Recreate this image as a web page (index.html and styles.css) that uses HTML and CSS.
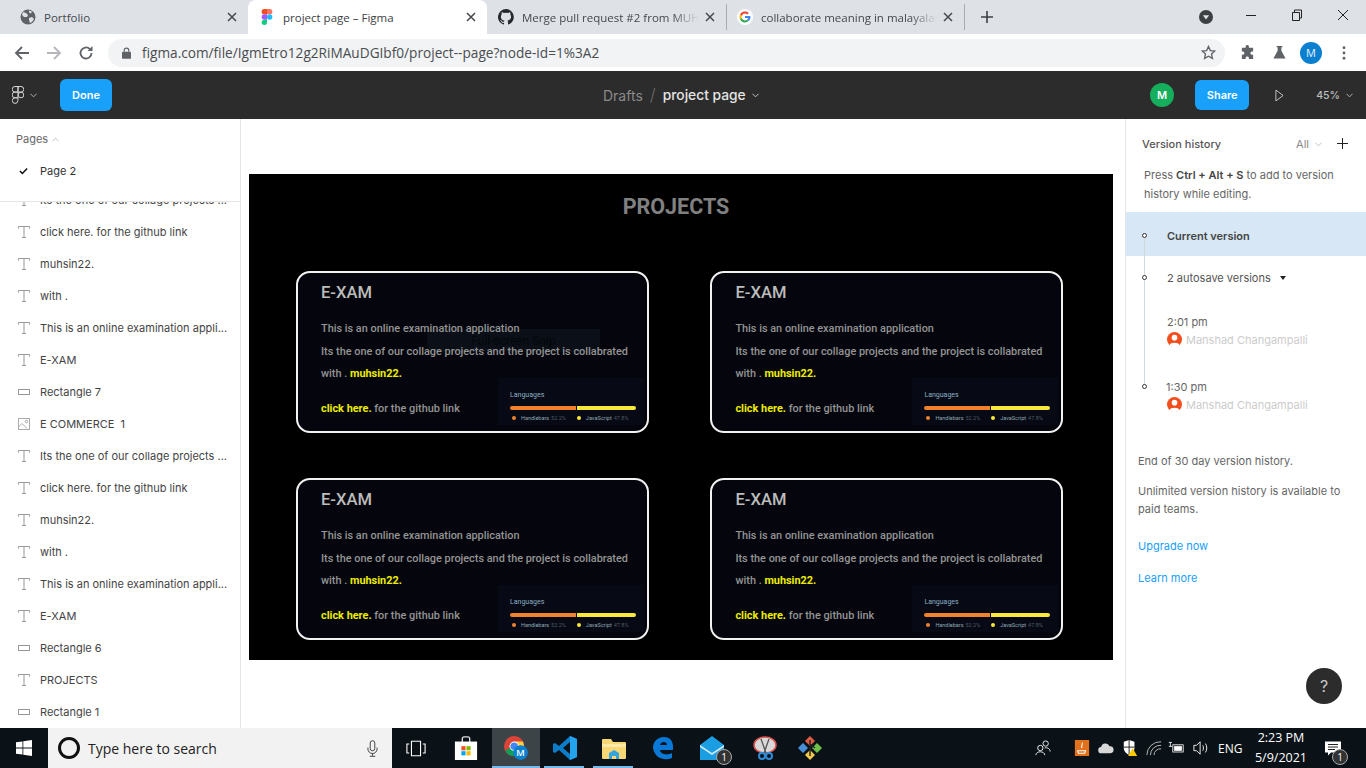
FILE: index.html

```html
<!doctype html>
<html>
<head>
  <meta charset='utf-8'>
  <title>project page – Figma</title>
  <link rel="stylesheet" href="styles.css">
</head>
<body>
<div id='tabstrip'>
  <div class='tab'>
    <svg class='favicon' viewBox='0 0 16 16'><circle cx='8' cy='8' r='7.5' fill='#5f6368'/><path d='M3 3l3 1 2 2-1 2-3 0-2-2zM9 9l3-1 2 2-2 3-2 1-1-3zM9 1.500l3 1-1 2-2-1z' fill='#dee1e6'/></svg>
    <span class='tabtitle'>Portfolio</span>
    <svg class='tabclose' viewBox='0 0 10 10'><path d='M1 1l8 8M9 1l-8 8' stroke='#45484c' stroke-width='1.500'/></svg>
  </div>
  <div class='tab active'>
    <svg class='favicon' viewBox='0 0 12 18'><path d='M3 0h3v6H3a3 3 0 010-6z' fill='#f24e1e'/><path d='M6 0h3a3 3 0 010 6H6z' fill='#ff7262'/><path d='M3 6h3v6H3a3 3 0 010-6z' fill='#a259ff'/><circle cx='9' cy='9' r='3' fill='#1abcfe'/><path d='M3 12h3v3a3 3 0 11-3-3z' fill='#0acf83'/></svg>
    <span class='tabtitle'>project page – Figma</span>
    <svg class='tabclose' viewBox='0 0 10 10'><path d='M1 1l8 8M9 1l-8 8' stroke='#45484c' stroke-width='1.500'/></svg>
  </div>
  <div class='tab'>
    <svg class='favicon' viewBox='0 0 16 16'><path fill='#24292e' d='M8 0a8 8 0 00-2.500 15.600c.4.1.5-.2.5-.4v-1.400c-2.200.5-2.700-1-2.700-1-.4-.9-.9-1.200-.9-1.200-.7-.5.1-.5.1-.5.8.1 1.200.8 1.200.8.700 1.200 1.900.9 2.300.7.100-.5.300-.9.500-1.100-1.800-.2-3.600-.9-3.600-4 0-.9.300-1.600.8-2.100-.1-.2-.4-1 .1-2.100 0 0 .7-.2 2.200.8a7.600 7.600 0 014 0c1.500-1 2.200-.8 2.200-.8.400 1.100.2 1.900.1 2.100.5.600.8 1.300.8 2.100 0 3.100-1.900 3.700-3.700 3.900.3.300.6.800.6 1.500v2.200c0 .2.100.5.600.4A8 8 0 008 0z'/></svg>
    <span class='tabtitle fade'>Merge pull request #2 from MUH</span>
    <svg class='tabclose' viewBox='0 0 10 10'><path d='M1 1l8 8M9 1l-8 8' stroke='#45484c' stroke-width='1.500'/></svg>
  </div>
  <div class='tab sep'>
    <svg class='favicon' viewBox='0 0 16 16'><circle cx='8' cy='8' r='8' fill='#fff'/><path d='M8 4.500a3.500 3.500 0 012.300.9l1.500-1.500A5.600 5.600 0 003 5.600l1.800 1.300A3.400 3.400 0 018 4.500z' fill='#ea4335'/><path d='M4.500 8c0-.4.100-.8.200-1.100L3 5.600a5.600 5.600 0 000 4.900l1.800-1.400A3.400 3.400 0 014.500 8z' fill='#fbbc05'/><path d='M8 11.500a3.400 3.400 0 01-3.200-2.400L3 10.500a5.600 5.600 0 008.700 1.600l-1.700-1.300c-.5.400-1.200.7-2 .7z' fill='#34a853'/><path d='M13.500 8l-.1-1.100H8v2.200h3.100c-.2.700-.6 1.300-1.100 1.700l1.700 1.300c1.100-1 1.800-2.400 1.800-4.100z' fill='#4285f4'/></svg>
    <span class='tabtitle fade'>collaborate meaning in malayalam</span>
    <svg class='tabclose' viewBox='0 0 10 10'><path d='M1 1l8 8M9 1l-8 8' stroke='#45484c' stroke-width='1.500'/></svg>
  </div>
  <div class='newtab'>
    <svg viewBox='0 0 12 12'><path d='M6 0v12M0 6h12' stroke='#3c4043' stroke-width='1.600'/></svg>
  </div>
  <div class='wincontrols'>
    <svg class='mediadot' viewBox='0 0 14 14'><circle cx='7' cy='7' r='7' fill='#3c4043'/><path d='M3.800 5.300h6.400L7 9.500z' fill='#dee1e6'/></svg>
    <svg class='winbtn' viewBox='0 0 46 30'><path d='M18 15.500h10' stroke='#222' stroke-width='1'/></svg>
    <svg class='winbtn' viewBox='0 0 46 30'><path d='M18.500 12.500h7v8h-7zM20.500 12.500v-2.500h7v8h-2' fill='none' stroke='#222' stroke-width='1'/></svg>
    <svg class='winbtn' viewBox='0 0 46 30'><path d='M18 10l10 10M28 10l-10 10' stroke='#222' stroke-width='1'/></svg>
  </div>
</div>

<div id='toolbar'>
  <svg class='navicon' viewBox='0 0 16 16'><path d='M15 8H2M8 2L2 8l6 6' fill='none' stroke='#5f6368' stroke-width='1.800'/></svg>
  <svg class='navicon' viewBox='0 0 16 16'><path d='M1 8h13M8 2l6 6-6 6' fill='none' stroke='#b4b6b9' stroke-width='1.800'/></svg>
  <svg class='navicon' viewBox='0 0 16 16'><path d='M13.500 8a5.500 5.500 0 11-1.600-3.900' fill='none' stroke='#5f6368' stroke-width='1.800'/><path d='M14.500 1v5h-5z' fill='#5f6368'/></svg>
  <div class='omnibox'>
    <svg class='lock' viewBox='0 0 10 13'><path d='M2.500 5V3.500a2.500 2.500 0 015 0V5' fill='none' stroke='#5f6368' stroke-width='1.300'/><rect y='5' width='10' height='8' rx='1' fill='#5f6368'/></svg>
    <span class='url'>figma.com/file/IgmEtro12g2RiMAuDGIbf0/project--page?node-id=1%3A2</span>
    <svg class='star' viewBox='0 0 16 16'><path d='M8 1.500l2 4.400 4.700.5-3.500 3.200 1 4.700L8 11.900l-4.200 2.400 1-4.700L1.300 6.400 6 5.900z' fill='none' stroke='#5f6368' stroke-width='1.400'/></svg>
  </div>
  <div class='extensions'>
    <svg class='exticon' viewBox='0 0 16 16'><path d='M6 1.500a1.800 1.800 0 013.500 0V3H14v4h-1.500a1.800 1.800 0 000 3.500H14V15H9.500v-1.300a1.800 1.800 0 00-3.500 0V15H2v-4.500h1.300a1.800 1.800 0 000-3.500H2V3h4z' fill='#5f6368'/></svg>
    <svg class='exticon flask' viewBox='0 0 16 16'><path d='M5 1h6v1.500h-1V6l4.500 8.500H1.500L6 6V2.500H5z' fill='#5f6368'/></svg>
    <span class='chromeavatar'>M</span>
    <svg class='kebab' viewBox='0 0 4 16'><circle cx='2' cy='2' r='1.600' fill='#5f6368'/><circle cx='2' cy='8' r='1.600' fill='#5f6368'/><circle cx='2' cy='14' r='1.600' fill='#5f6368'/></svg>
  </div>
</div>

<div id='figmabar'>
  <svg class='figmalogo' viewBox='0 0 12 18'><g fill='none' stroke='#d4d4d4' stroke-width='1'><path d='M6 .5H3a2.800 2.800 0 000 5.600h3zM6 .5h3a2.800 2.800 0 010 5.600H6zM6 6.100H3a2.800 2.800 0 000 5.700h3z'/><circle cx='9' cy='9' r='2.800'/><path d='M6 11.800H3a2.800 2.800 0 102.900 2.900z'/></g></svg>
  <svg class='caret light' viewBox='0 0 8 5'><path d='M.5.500L4 4 7.500.5' fill='none' stroke='#c4c4c4'/></svg>
  <button class='bluebtn done'>Done</button>
  <div class='breadcrumb'>
    <span class='crumbdim'>Drafts</span>
    <span class='crumbslash'>/</span>
    <span class='crumbname'>project page</span>
    <svg class='caret' viewBox='0 0 8 5'><path d='M.5.500L4 4 7.500.5' fill='none' stroke='#d8d8d8'/></svg>
  </div>
  <div class='barright'>
    <span class='useravatar'>M</span>
    <button class='bluebtn share'>Share</button>
    <svg class='play' viewBox='0 0 10 14'><path d='M1 1l8 6-8 6z' fill='none' stroke='#d0d0d0' stroke-width='1'/></svg>
    <span class='zoomlevel'>45%</span>
    <svg class='caret' viewBox='0 0 8 5'><path d='M.5.500L4 4 7.500.5' fill='none' stroke='#c4c4c4'/></svg>
  </div>
</div>

<div id='workspace'>
  <div id='leftpanel'>
    <div class='pageshead'>
      <span>Pages</span>
      <svg class='caret' viewBox='0 0 8 5'><path d='M.5 4.500L4 1l3.500 3.500' fill='none' stroke='#b8b8b8'/></svg>
    </div>
    <div class='pagerow'>
      <svg class='check' viewBox='0 0 10 8'><path d='M1 4l2.800 2.800L9 1.200' fill='none' stroke='#111' stroke-width='1.700'/></svg>
      <span>Page 2</span>
    </div>
    <div class='layers'>
      <div class='layerlist'>
        <div class='layer'><svg class='ltype' viewBox='0 0 12 12'><path d='M.5 2.500V.5h11v2M6 .5v11M4 11.500h4' fill='none' stroke='#999'/></svg><span>Its the one of our collage projects ...</span></div>
        <div class='layer'><svg class='ltype' viewBox='0 0 12 12'><path d='M.5 2.500V.5h11v2M6 .5v11M4 11.500h4' fill='none' stroke='#999'/></svg><span>click here. for the github link</span></div>
        <div class='layer'><svg class='ltype' viewBox='0 0 12 12'><path d='M.5 2.500V.5h11v2M6 .5v11M4 11.500h4' fill='none' stroke='#999'/></svg><span>muhsin22.</span></div>
        <div class='layer'><svg class='ltype' viewBox='0 0 12 12'><path d='M.5 2.500V.5h11v2M6 .5v11M4 11.500h4' fill='none' stroke='#999'/></svg><span>with .</span></div>
        <div class='layer'><svg class='ltype' viewBox='0 0 12 12'><path d='M.5 2.500V.5h11v2M6 .5v11M4 11.500h4' fill='none' stroke='#999'/></svg><span>This is an online examination appli...</span></div>
        <div class='layer'><svg class='ltype' viewBox='0 0 12 12'><path d='M.5 2.500V.5h11v2M6 .5v11M4 11.500h4' fill='none' stroke='#999'/></svg><span>E-XAM</span></div>
        <div class='layer'><svg class='lrect' viewBox='0 0 12 6'><rect x='.5' y='.5' width='11' height='5' fill='none' stroke='#999'/></svg><span>Rectangle 7</span></div>
        <div class='layer'><svg class='ltype' viewBox='0 0 12 12'><rect x='.5' y='.5' width='11' height='11' fill='none' stroke='#aaa'/><path d='M.5 9l3.500-3.500 5 5' fill='none' stroke='#aaa'/><circle cx='8.500' cy='3.500' r='1.300' fill='none' stroke='#aaa'/></svg><span>E COMMERCE&nbsp; 1</span></div>
        <div class='layer'><svg class='ltype' viewBox='0 0 12 12'><path d='M.5 2.500V.5h11v2M6 .5v11M4 11.500h4' fill='none' stroke='#999'/></svg><span>Its the one of our collage projects ...</span></div>
        <div class='layer'><svg class='ltype' viewBox='0 0 12 12'><path d='M.5 2.500V.5h11v2M6 .5v11M4 11.500h4' fill='none' stroke='#999'/></svg><span>click here. for the github link</span></div>
        <div class='layer'><svg class='ltype' viewBox='0 0 12 12'><path d='M.5 2.500V.5h11v2M6 .5v11M4 11.500h4' fill='none' stroke='#999'/></svg><span>muhsin22.</span></div>
        <div class='layer'><svg class='ltype' viewBox='0 0 12 12'><path d='M.5 2.500V.5h11v2M6 .5v11M4 11.500h4' fill='none' stroke='#999'/></svg><span>with .</span></div>
        <div class='layer'><svg class='ltype' viewBox='0 0 12 12'><path d='M.5 2.500V.5h11v2M6 .5v11M4 11.500h4' fill='none' stroke='#999'/></svg><span>This is an online examination appli...</span></div>
        <div class='layer'><svg class='ltype' viewBox='0 0 12 12'><path d='M.5 2.500V.5h11v2M6 .5v11M4 11.500h4' fill='none' stroke='#999'/></svg><span>E-XAM</span></div>
        <div class='layer'><svg class='lrect' viewBox='0 0 12 6'><rect x='.5' y='.5' width='11' height='5' fill='none' stroke='#999'/></svg><span>Rectangle 6</span></div>
        <div class='layer'><svg class='ltype' viewBox='0 0 12 12'><path d='M.5 2.500V.5h11v2M6 .5v11M4 11.500h4' fill='none' stroke='#999'/></svg><span>PROJECTS</span></div>
        <div class='layer'><svg class='lrect' viewBox='0 0 12 6'><rect x='.5' y='.5' width='11' height='5' fill='none' stroke='#999'/></svg><span>Rectangle 1</span></div>
      </div>
    </div>
  </div>

  <div id='canvas'>
    <div class='frame'>
      <h1 class='frametitle'>PROJECTS</h1>
      <div class='cardgrid'>
        <div class='card'>
          <div class='snip'>Full-screen Snip</div>
          <h2>E-XAM</h2>
          <p>This is an online examination application</p>
          <p>Its the one of our collage projects and the project is collabrated</p>
          <p>with . <b>muhsin22.</b></p>
          <p class='linkline'><b>click here.</b> for the github link</p>
          <div class='langs'>
            <div class='langtitle'>Languages</div>
            <div class='langbar'><i class='hbs'></i><i class='js'></i></div>
            <div class='langkeys'><span class='dot orange'></span><span class='lname'>Handlebars</span><span class='lpct'>52.2%</span><span class='dot yellow'></span><span class='lname'>JavaScript</span><span class='lpct'>47.8%</span></div>
          </div>
        </div>
        <div class='card'>
          <h2>E-XAM</h2>
          <p>This is an online examination application</p>
          <p>Its the one of our collage projects and the project is collabrated</p>
          <p>with . <b>muhsin22.</b></p>
          <p class='linkline'><b>click here.</b> for the github link</p>
          <div class='langs'>
            <div class='langtitle'>Languages</div>
            <div class='langbar'><i class='hbs'></i><i class='js'></i></div>
            <div class='langkeys'><span class='dot orange'></span><span class='lname'>Handlebars</span><span class='lpct'>52.2%</span><span class='dot yellow'></span><span class='lname'>JavaScript</span><span class='lpct'>47.8%</span></div>
          </div>
        </div>
        <div class='card'>
          <h2>E-XAM</h2>
          <p>This is an online examination application</p>
          <p>Its the one of our collage projects and the project is collabrated</p>
          <p>with . <b>muhsin22.</b></p>
          <p class='linkline'><b>click here.</b> for the github link</p>
          <div class='langs'>
            <div class='langtitle'>Languages</div>
            <div class='langbar'><i class='hbs'></i><i class='js'></i></div>
            <div class='langkeys'><span class='dot orange'></span><span class='lname'>Handlebars</span><span class='lpct'>52.2%</span><span class='dot yellow'></span><span class='lname'>JavaScript</span><span class='lpct'>47.8%</span></div>
          </div>
        </div>
        <div class='card'>
          <h2>E-XAM</h2>
          <p>This is an online examination application</p>
          <p>Its the one of our collage projects and the project is collabrated</p>
          <p>with . <b>muhsin22.</b></p>
          <p class='linkline'><b>click here.</b> for the github link</p>
          <div class='langs'>
            <div class='langtitle'>Languages</div>
            <div class='langbar'><i class='hbs'></i><i class='js'></i></div>
            <div class='langkeys'><span class='dot orange'></span><span class='lname'>Handlebars</span><span class='lpct'>52.2%</span><span class='dot yellow'></span><span class='lname'>JavaScript</span><span class='lpct'>47.8%</span></div>
          </div>
        </div>
      </div>
    </div>
  </div>

  <div id='rightpanel'>
    <div class='vhhead'>
      <span class='vhtitle'>Version history</span>
      <span class='vhall'>All</span>
      <svg class='caret' viewBox='0 0 8 5'><path d='M.5.500L4 4 7.500.5' fill='none' stroke='#b8b8b8'/></svg>
      <svg class='plus' viewBox='0 0 11 11'><path d='M5.500 0v11M0 5.500h11' stroke='#222' stroke-width='1'/></svg>
    </div>
    <p class='vhhint'>Press <b>Ctrl + Alt + S</b> to add to version history while editing.</p>
    <div class='timeline'>
      <div class='vrow current'><span class='node'></span><span>Current version</span></div>
      <div class='vrow autosave'><span class='node'></span><span>2 autosave versions</span><svg class='tri' viewBox='0 0 6 4'><path d='M0 0h6L3 4z' fill='#222'/></svg></div>
      <div class='ventry'>
        <div class='vtime'>2:01 pm</div>
        <div class='vuser'><svg class='uicon' viewBox='0 0 16 16'><circle cx='8' cy='8' r='8' fill='#f24e1e'/><circle cx='8' cy='6' r='3' fill='#fff'/><path d='M2.500 14c1-3.500 10-3.500 11 0a8 8 0 01-11 0z' fill='#fff'/></svg><span>Manshad Changampalli</span></div>
      </div>
      <div class='ventry last'>
        <span class='node'></span>
        <div class='vtime'>1:30 pm</div>
        <div class='vuser'><svg class='uicon' viewBox='0 0 16 16'><circle cx='8' cy='8' r='8' fill='#f24e1e'/><circle cx='8' cy='6' r='3' fill='#fff'/><path d='M2.500 14c1-3.500 10-3.500 11 0a8 8 0 01-11 0z' fill='#fff'/></svg><span>Manshad Changampalli</span></div>
      </div>
    </div>
    <div class='vhfoot'>
      <p>End of 30 day version history.</p>
      <p class='unlimited'>Unlimited version history is available to paid teams.</p>
      <p><a>Upgrade now</a></p>
      <p><a>Learn more</a></p>
    </div>
    <div class='helpbtn'>?</div>
  </div>
</div>

<div id='taskbar'>
  <div class='startbtn'>
    <svg viewBox='0 0 16 16'><path d='M0 2.300l6.500-.9v6.200H0zM7.300 1.300L16 0v7.600H7.300zM0 8.400h6.500v6.200L0 13.700zM7.300 8.400H16V16l-8.700-1.200z' fill='#fff'/></svg>
  </div>
  <div class='searchbox'>
    <span class='cortana'></span>
    <span class='searchtext'>Type here to search</span>
    <svg class='mic' viewBox='0 0 12 18'><rect x='3.500' y='.5' width='5' height='11' rx='2.500' fill='none' stroke='#333'/><path d='M1 8v1.500a5 5 0 0010 0V8M6 14.500V17M3 17.500h6' fill='none' stroke='#333'/></svg>
  </div>
  <div class='taskapp taskview'><svg viewBox='0 0 22 18'><path d='M6 1h10v16H6zM3.500 4H1v10h2.500M18.500 4H21v10h-2.500' fill='none' stroke='#fff' stroke-width='1.200'/></svg></div>
  <div class='taskapp store'><svg viewBox='0 0 24 26'><path d='M8 7V3a2 2 0 012-2h4a2 2 0 012 2v4' fill='none' stroke='#ddd' stroke-width='1.500'/><rect y='6' width='24' height='20' fill='#fff'/><rect x='7' y='11' width='4.500' height='4.500' fill='#f25022'/><rect x='12.500' y='11' width='4.500' height='4.500' fill='#7fba00'/><rect x='7' y='16.500' width='4.500' height='4.500' fill='#00a4ef'/><rect x='12.500' y='16.500' width='4.500' height='4.500' fill='#ffb900'/></svg></div>
  <div class='taskapp running focus'><svg viewBox='0 0 26 26'><circle cx='11' cy='11' r='11' fill='#db4437'/><path d='M1.500 16A11 11 0 0011 22l5-9H6z' fill='#0f9d58'/><path d='M11 6h9.500A11 11 0 0117 20l-4-9z' fill='#ffcd40'/><circle cx='11' cy='11' r='5' fill='#fff'/><circle cx='11' cy='11' r='4' fill='#4285f4'/><circle cx='18' cy='18' r='8' fill='#0b7fd0'/><text x='18' y='21.500' text-anchor='middle' class='badgeletter'>M</text></svg></div>
  <div class='taskapp running'><svg viewBox='0 0 24 24'><path d='M17 0l7 3v18l-7 3L6 14l-4 3-2-1V8l2-1 4 3zM17 6l-7 6 7 6z' fill='#0d7dc9'/><path d='M17 0l7 3v18l-7 3z' fill='#23a3ec'/></svg></div>
  <div class='taskapp running'><svg viewBox='0 0 24 22'><path d='M0 3a1 1 0 011-1h8l2 3h12a1 1 0 011 1v15a1 1 0 01-1 1H1a1 1 0 01-1-1z' fill='#f8d775'/><path d='M0 7h24v3H0z' fill='#fde9a6'/><path d='M7 22v-6l5-3 5 3v6z' fill='#35a4dd'/><path d='M10 22v-3h4v3z' fill='#f8d775'/></svg></div>
  <div class='taskapp'><svg viewBox='0 0 22 24'><path d='M1 12C1 5 6 1 12 1c6 0 9 4 9 10v3H8c0 4 7 6 12 3v5c-7 3-17 1-19-10zM8 9h7c0-4-6-4-7 0z' fill='#0a78d7'/></svg></div>
  <div class='taskapp mail'><svg viewBox='0 0 24 24'><path d='M0 9L12 0l12 9v15H0z' fill='#1b9de2'/><path d='M0 9l12 8 12-8v2L12 19 0 11z' fill='#cfeaf9'/></svg><span class='countbadge'>1</span></div>
  <div class='taskapp snipapp'><svg viewBox='0 0 24 24'><ellipse cx='12' cy='9' rx='11' ry='8' fill='#d9d9d9' stroke='#d9534f' stroke-width='1.500'/><path d='M8 3l5 14M16 3l-5 14' stroke='#555' stroke-width='1.300'/><circle cx='9' cy='20' r='3' fill='none' stroke='#2e8bd8' stroke-width='2'/><circle cx='16' cy='20' r='3' fill='none' stroke='#2e8bd8' stroke-width='2'/></svg></div>
  <div class='taskapp gitapp'><svg viewBox='0 0 24 24'><path d='M12 0l5 5-5 5-5-5z' fill='#e05d44'/><path d='M5 7l5 5-5 5-5-5z' fill='#4a90d9'/><path d='M19 7l5 5-5 5-5-5z' fill='#6fbf4a'/><path d='M12 14l5 5-5 5-5-5z' fill='#f2c94c'/><path d='M12 4v16M12 8l5 4' stroke='#222' stroke-width='1.400' fill='none'/></svg></div>
  <div class='tray'>
    <svg class='trayicon people' viewBox='0 0 18 18'><circle cx='6' cy='9' r='3' fill='none' stroke='#fff'/><path d='M1 17c0-5 10-5 10 0' fill='none' stroke='#fff'/><circle cx='12' cy='4' r='3' fill='none' stroke='#fff'/><path d='M11 9c3-1 6 1 6 4' fill='none' stroke='#fff'/></svg>
    <svg class='trayicon' viewBox='0 0 16 18'><rect width='16' height='18' fill='#e2711d'/><path d='M3 12h9l-1 3H4zM8 3c2 2-2 3 0 6' fill='none' stroke='#fff' stroke-width='1.200'/></svg>
    <svg class='trayicon' viewBox='0 0 18 12'><path d='M4 12a3.500 3.500 0 01-.5-7A5 5 0 0113 4a4 4 0 011 8z' fill='#d8d8d8'/></svg>
    <svg class='trayicon' viewBox='0 0 16 18'><path d='M1 2l6-2 6 2v7c0 4-3 6-6 8-3-2-6-4-6-8z' fill='#fff'/><path d='M7 0v17M1 8h12' stroke='#111'/><path d='M11 9l5 9H6z' fill='#ffc900'/></svg>
    <svg class='trayicon wifi' viewBox='0 0 18 18'><path d='M1 17A15 15 0 0117 2M5 17A11 11 0 0117 6M9 17a7 7 0 018-7' fill='none' stroke='#c8c8c8' stroke-width='1'/></svg>
    <svg class='trayicon wide' viewBox='0 0 20 16'><rect x='6' y='4' width='13' height='9' fill='none' stroke='#fff'/><path d='M8 6h9v5H8zM1 6h4M3 1v5M1 1h4' fill='#fff' stroke='#fff'/></svg>
    <svg class='trayicon wide' viewBox='0 0 18 16'><path d='M1 5h3l4-4v14l-4-4H1z' fill='none' stroke='#fff'/><path d='M11 5c1 2 1 4 0 6M14 3c2 3 2 7 0 10' fill='none' stroke='#fff'/></svg>
    <span class='traytext'>ENG</span>
    <div class='clock'><div>2:23 PM</div><div>5/9/2021</div></div>
    <div class='notif'>
      <svg viewBox='0 0 16 14'><path d='M0 0h16v11H6l-3 3v-3H0z' fill='#fff'/><path d='M3 3h10M3 5.500h10M3 8h7' stroke='#222'/></svg>
      <span class='countbadge'>1</span>
    </div>
  </div>
</div>
</body>
</html>
```

FILE: styles.css

```css
*{margin:0;padding:0;box-sizing:border-box;}
html,body{width:1366px;height:768px;overflow:hidden;}
body{display:flex;flex-direction:column;font-family:"Inter","Noto Sans",sans-serif;background:#fff;}
svg{display:block;flex:none;}

/* chrome tabs */
#tabstrip{height:34px;background:#dee1e6;display:flex;align-items:stretch;}
.tab{width:239px;display:flex;align-items:center;padding:0 10px 0 11px;position:relative;font-family:"Open Sans","Noto Sans",sans-serif;font-size:11.500px;color:#45484c;}
.tab:first-child{width:248px;padding-left:20px;}
.tab.active{background:#fff;border-radius:8px 8px 0 0;color:#3c4043;}
.tab.sep{border-left:1px solid #a9abae;border-right:1px solid #a9abae;height:26px;margin:4px 0 0;padding-left:10px;}
.favicon{width:16px;height:16px;margin-right:8px;}
.tabtitle{flex:1;white-space:nowrap;overflow:hidden;}
.tabtitle.fade{-webkit-mask-image:linear-gradient(90deg,#000 85%,transparent);mask-image:linear-gradient(90deg,#000 85%,transparent);}
.tabclose{width:10px;height:10px;margin-left:6px;margin-right:1px;}
.newtab{width:44px;display:flex;align-items:center;justify-content:center;}
.newtab svg{width:12px;height:12px;}
.wincontrols{margin-left:auto;display:flex;align-items:center;}
.mediadot{width:14px;height:14px;margin-right:15px;}
.winbtn{width:46px;height:30px;margin-bottom:4px;}

/* url bar */
#toolbar{height:37px;background:#fff;display:flex;align-items:center;padding-left:14px;}
.navicon{width:16px;height:16px;margin-right:16px;}
.navicon:nth-child(3){margin-right:14px;}
.omnibox{width:1117px;height:28px;border-radius:14px;background:#f1f3f4;display:flex;align-items:center;padding:0 9px 0 14px;}
.lock{width:9px;height:12px;margin-right:11px;}
.url{flex:1;font-family:"Open Sans","Noto Sans",sans-serif;font-size:13.650px;color:#4a4d50;white-space:nowrap;}
.star{width:15px;height:15px;}
.extensions{flex:1;display:flex;align-items:center;padding-left:15px;}
.exticon{width:15px;height:15px;margin-right:17px;}
.exticon.flask{margin-right:13px;}
.chromeavatar{width:22px;height:22px;border-radius:50%;background:#0b7fd0;color:#e8f3fb;font:11px "Open Sans",sans-serif;display:flex;align-items:center;justify-content:center;}
.kebab{width:4px;height:14px;margin-left:20px;}

/* figma bar */
#figmabar{height:48px;background:#2c2c2c;display:flex;align-items:center;position:relative;padding-left:12px;}
.figmalogo{width:12px;height:18px;}
.caret{width:7px;height:5px;margin-left:6px;}
.bluebtn{border:0;background:#18a0fb;color:#fff;font:600 11px "Inter",sans-serif;border-radius:6px;display:flex;align-items:center;justify-content:center;}
.done{width:52px;height:32px;margin-left:23px;}
.breadcrumb{position:absolute;left:603px;top:0;height:48px;display:flex;align-items:center;font-size:14px;}
.crumbdim{color:#8a8a8a;}
.crumbslash{color:#6a6a6a;margin:0 7px;font-size:17px;font-weight:300;}
.crumbname{color:#e4e4e4;font-weight:500;font-size:13.800px;}
.barright{margin-left:auto;display:flex;align-items:center;padding-right:13px;}
.useravatar{width:24px;height:24px;border-radius:50%;background:#14ae5c;color:#fff;font-size:11px;font-weight:600;display:flex;align-items:center;justify-content:center;}
.share{width:54px;height:30px;margin-left:21px;}
.play{width:9px;height:13px;margin-left:26px;}
.zoomlevel{color:#bdbdbd;font-size:10.500px;font-weight:500;margin-left:32px;}

/* main area */
#workspace{height:609px;display:flex;position:relative;}
#leftpanel{width:241px;border-right:1px solid #e5e5e5;display:flex;flex-direction:column;font-size:11px;color:#444;}
.pageshead{height:40px;display:flex;align-items:center;padding-left:16px;color:#666;}
.pageshead .caret{margin-left:4px;}
.pagerow{height:24px;display:flex;align-items:center;padding-left:19px;color:#333;}
.check{width:9px;height:8px;margin-right:12px;}
.layers{flex:1;overflow:hidden;border-top:1px solid #e5e5e5;margin-top:18px;}
.layerlist{margin-top:-18px;}
.layer{height:32px;display:flex;align-items:center;padding-left:18px;white-space:nowrap;}
.ltype{width:12px;height:12px;margin-right:10px;}
.lrect{width:12px;height:6px;margin-right:10px;}
#canvas{flex:1;background:#fff;padding:55px 0 0 8px;}

.frame{width:864px;height:486px;background:#000;padding:20px 0 0 47px;}
.frametitle{font:700 21.500px "Roboto",sans-serif;color:#808080;margin-left:-47px;width:854px;text-align:center;height:26px;line-height:26px;}
.cardgrid{display:grid;grid-template-columns:353px 353px;grid-auto-rows:162px;column-gap:61.400px;row-gap:45px;margin-top:51px;}
.card{position:relative;border:2px solid #f2f2f2;border-radius:14px;background:#05060d;padding:10px 0 0 23px;font:500 10.900px "Roboto",sans-serif;color:#949494;}
.card h2{font:500 16.600px "Roboto",sans-serif;color:#bcbcbc;height:20px;line-height:20px;margin-bottom:15px;position:relative;}
.card p{height:22.500px;line-height:22.500px;white-space:nowrap;position:relative;}
.card b{color:#ecec00;font-weight:700;}
.card .linkline{margin-top:12px;}
.snip{position:absolute;left:129px;top:56px;width:173px;height:23px;background:#0b1018;color:#04060a;font:400 12px "Roboto",sans-serif;line-height:24px;text-align:center;}
.langs{position:absolute;left:200px;top:105px;width:146px;height:47px;background:#070a15;padding:13px 0 0 12px;font:400 5.500px "Roboto",sans-serif;color:#7f94a0;}
.langtitle{font-size:7px;color:#8ab0c2;height:9px;line-height:9px;}
.langbar{width:126px;height:4px;margin-top:6px;display:flex;gap:1px;border-radius:2px;overflow:hidden;}
.langbar .hbs{width:52%;background:#f1812a;}
.langbar .js{flex:1;background:#f7e83a;}
.langkeys{display:flex;align-items:center;margin-top:4px;height:8px;padding-left:2px;white-space:nowrap;}
.dot{width:4px;height:4px;border-radius:50%;margin-right:5px;}
.dot.orange{background:#f1812a;}
.dot.yellow{background:#f7e83a;margin-left:11px;}
.lname{color:#8fa7b3;margin-right:2px;}
.lpct{color:#4f5a63;}

#rightpanel{width:241px;border-left:1px solid #e5e5e5;position:relative;font-size:11px;color:#444;}
.vhhead{height:50px;display:flex;align-items:center;padding:0 18px 0 16px;}
.vhtitle{flex:1;font-weight:500;color:#555;}
.vhall{color:#888;}
.plus{width:11px;height:11px;margin-left:15px;margin-bottom:2px;}
.vhhint{padding:0 18px;line-height:19px;color:#666;margin-top:-3px;height:46px;}
.vhhint b{font-weight:600;color:#444;}
.timeline{position:relative;}
.vrow{height:44px;display:flex;align-items:center;padding:4px 0 0 41px;position:relative;}
.current{background:#d7e7f5;font-weight:600;color:#444;}
.autosave{height:40px;color:#555;}
.tri{width:6px;height:4px;margin-left:9px;}
.timeline:before{content:'';position:absolute;z-index:1;left:18px;top:24px;height:151px;width:1px;background:#d0d8df;}
.node{position:absolute;z-index:2;left:16px;top:50%;margin-top:-1px;width:5px;height:5px;border:1px solid #333;border-radius:50%;background:#fff;}
.ventry{height:65px;padding:17px 0 0 41px;position:relative;color:#666;}
.ventry .node{top:23px;margin-top:0;}
.vtime{height:18px;line-height:18px;}
.ventry.last .vtime{margin-left:-1px;}
.vuser{display:flex;align-items:center;color:#ccc;margin-top:1px;}
.uicon{width:15px;height:15px;margin-right:4px;}
.vhfoot{padding:0 12px;margin-top:26px;line-height:18px;color:#666;}
.vhfoot p{margin-bottom:14px;}
.vhfoot p:first-child{margin-bottom:12px;}
.vhfoot .unlimited{margin-bottom:19px;}
.vhfoot a{color:#18a0fb;}
.helpbtn{position:absolute;left:180px;top:549px;width:36px;height:36px;border-radius:50%;background:#2c2c2c;color:#c8c8c8;font-size:16px;display:flex;align-items:center;justify-content:center;}

/* windows taskbar */
#taskbar{height:40px;background:#0b1217;display:flex;align-items:stretch;color:#fff;font-family:"Open Sans","Noto Sans",sans-serif;}
.startbtn{width:48px;display:flex;align-items:center;justify-content:center;}
.startbtn svg{width:16px;height:16px;}
.searchbox{width:344px;background:#f2f2f2;display:flex;align-items:center;padding:0 14px 0 10px;color:#222;}
.cortana{width:22px;height:22px;border:3px solid #111;border-radius:50%;margin-right:8px;}
.searchtext{flex:1;font-size:14px;}
.mic{width:11px;height:17px;}
.taskapp{width:49px;display:flex;align-items:center;justify-content:center;position:relative;}
.taskapp svg{width:24px;height:24px;}
.taskview{width:48px;}
.taskview svg{width:20px;height:17px;}
.store{width:52px;}
.mail{width:50px;}
.snipapp{width:56px;}
.gitapp{width:34px;}
.taskapp.running:after{content:'';position:absolute;left:4px;right:5px;bottom:0;height:2px;background:#76b9ed;}
.taskapp.focus{width:48px;background:#3c4448;}
.taskapp.focus:after{left:0;right:0;}
.badgeletter{font:600 10px "Open Sans",sans-serif;fill:#fff;}
.countbadge{position:absolute;width:16px;height:16px;border-radius:50%;background:#333;border:1px solid #aaa;color:#fff;font-size:10px;display:flex;align-items:center;justify-content:center;}
.taskapp .countbadge{left:29px;top:21px;}
.tray{margin-left:auto;display:flex;align-items:center;padding-right:19px;}
.trayicon{width:16px;height:16px;margin-right:8px;}
.trayicon.people{margin-right:23px;}
.trayicon.wifi{margin-right:6px;}
.trayicon.wide{margin-right:9px;}
.traytext{font-size:12px;width:24px;text-align:center;}
.clock{font-size:12.500px;line-height:20px;text-align:center;width:62px;margin-left:8px;}
.notif{width:22px;margin-left:13px;position:relative;}
.notif svg{width:16px;height:15px;}
.notif .countbadge{left:7px;top:8px;}
```
